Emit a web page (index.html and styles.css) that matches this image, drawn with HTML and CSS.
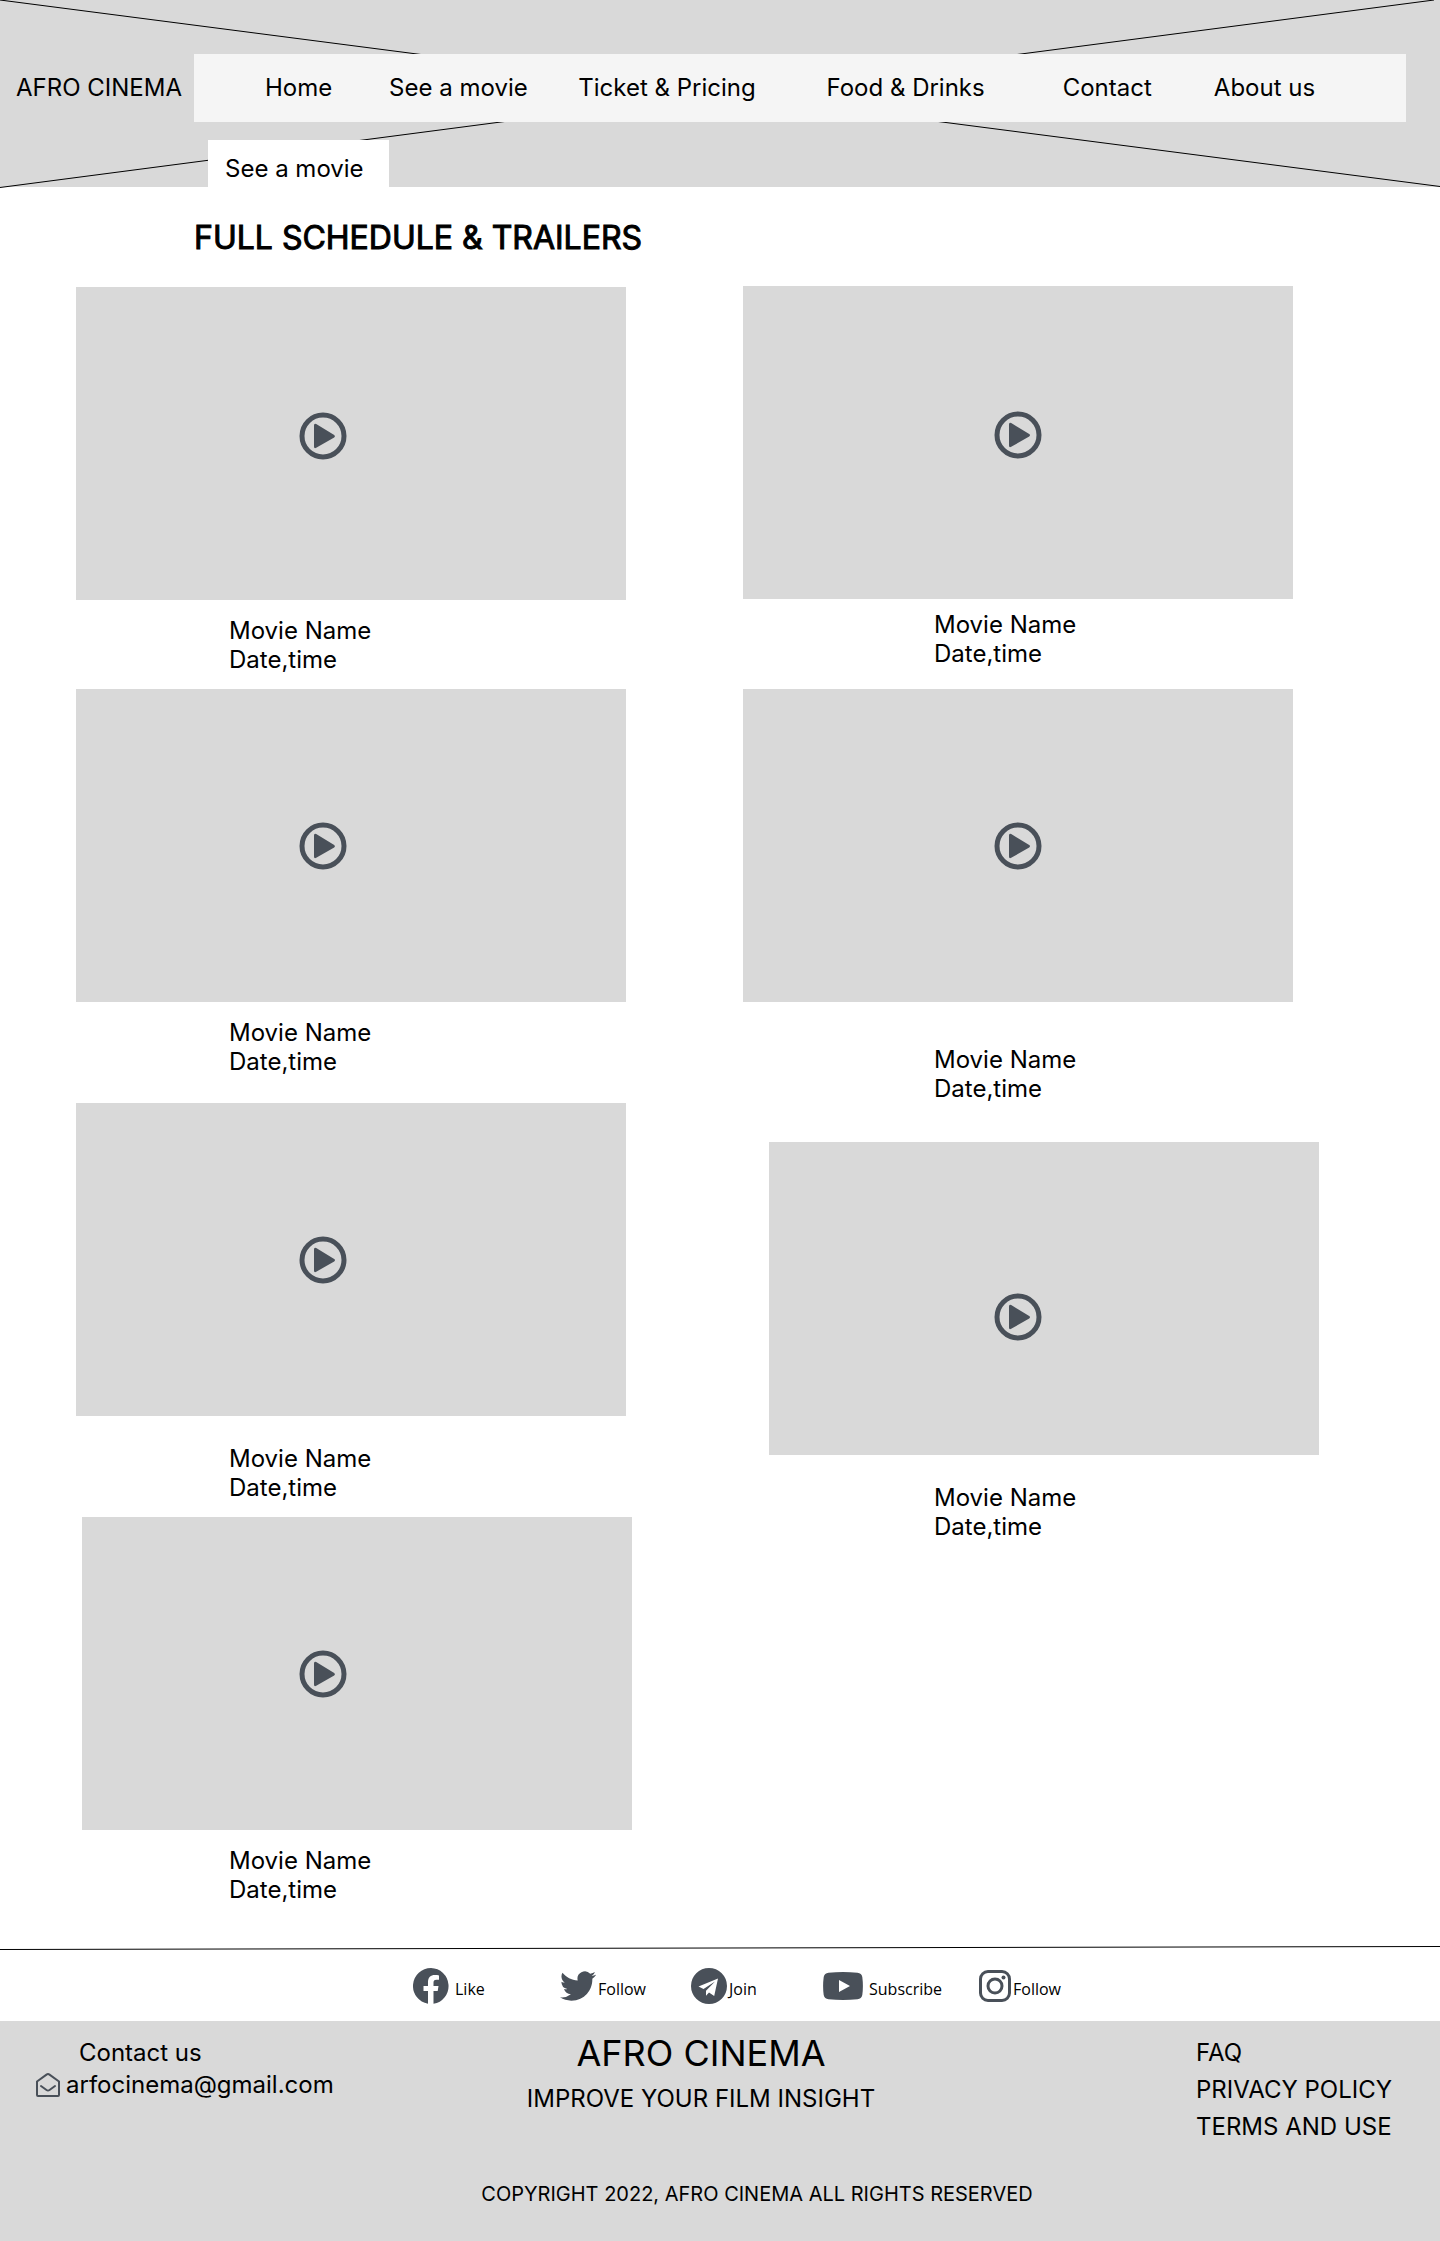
FILE: index.html
```html
<!DOCTYPE html>
<html lang="en">
<head>
<meta charset="utf-8">
<meta name="viewport" content="width=device-width, initial-scale=1">
<title>Afro Cinema – Full schedule &amp; trailers</title>
<link rel="stylesheet" href="styles.css">
</head>
<body>
<svg class="sprite" aria-hidden="true">
  <symbol id="play" viewBox="0 0 48 48">
    <circle cx="24" cy="24" r="21" fill="none" stroke="currentColor" stroke-width="5"/>
    <path d="M15 13.500v21q0 2.400 2.200 1.300l18-10.300q1.600-1.200 0-2.400l-18-11q-2.200-1.200-2.200 1.400z" fill="currentColor"/>
  </symbol>
</svg>

<header class="hero">
  <svg class="hero-cross" viewBox="0 0 1440 187" preserveAspectRatio="none" aria-hidden="true">
    <path d="M0 0L1440 186.500M0 187.500L1434 0" stroke="#000" fill="none"/>
  </svg>
  <div class="bar">
    <a class="brand" href="#">AFRO CINEMA</a>
    <nav class="nav">
      <a href="#">Home</a>
      <a href="#">See a movie</a>
      <a href="#">Ticket &amp; Pricing</a>
      <a href="#">Food &amp; Drinks</a>
      <a href="#">Contact</a>
      <a href="#">About us</a>
    </nav>
  </div>
  <a class="tab" href="#">See a movie</a>
</header>

<main>
  <h1 class="title">FULL SCHEDULE &amp; TRAILERS</h1>
  <div class="schedule">
    <div class="column column-left">
      <article class="movie">
        <div class="thumb thumb-high"><button class="play" aria-label="Play trailer"><svg><use href="#play"/></svg></button></div>
        <p class="caption">Movie Name<br>Date,time</p>
      </article>
      <article class="movie">
        <div class="thumb"><button class="play" aria-label="Play trailer"><svg><use href="#play"/></svg></button></div>
        <p class="caption">Movie Name<br>Date,time</p>
      </article>
      <article class="movie movie-spaced">
        <div class="thumb"><button class="play" aria-label="Play trailer"><svg><use href="#play"/></svg></button></div>
        <p class="caption caption-low">Movie Name<br>Date,time</p>
      </article>
      <article class="movie">
        <div class="thumb thumb-nudged"><button class="play" aria-label="Play trailer"><svg><use href="#play"/></svg></button></div>
        <p class="caption">Movie Name<br>Date,time</p>
      </article>
    </div>
    <div class="column column-right">
      <article class="movie">
        <div class="thumb thumb-high"><button class="play" aria-label="Play trailer"><svg><use href="#play"/></svg></button></div>
        <p class="caption caption-tight">Movie Name<br>Date,time</p>
      </article>
      <article class="movie">
        <div class="thumb"><button class="play" aria-label="Play trailer"><svg><use href="#play"/></svg></button></div>
        <p class="caption caption-lowest">Movie Name<br>Date,time</p>
      </article>
      <article class="movie">
        <div class="thumb thumb-shifted"><button class="play" aria-label="Play trailer"><svg><use href="#play"/></svg></button></div>
        <p class="caption caption-low">Movie Name<br>Date,time</p>
      </article>
    </div>
  </div>
</main>

<svg class="rule" viewBox="0 0 1440 4" preserveAspectRatio="none" aria-hidden="true"><path d="M0 3.500L1440 .5" stroke="#000" fill="none"/></svg>

<div class="social">
  <a class="roomy" href="#"><svg class="ico ico-fb" viewBox="0 0 36 36"><path fill="currentColor" d="M18 0a18 18 0 0 0-3 35.750V23h-4.500v-5H15v-4c0-4.600 2.700-7 6.800-7 1.600 0 3.200.2 4.200.4v4.300h-2.500c-2.300 0-3 1.300-3 2.800V18h5l-.8 5h-4.200v12.750A18 18 0 0 0 18 0z"/></svg><span>Like</span></a>
  <a href="#"><svg class="ico ico-tw" viewBox="0 0 24 20"><path fill="currentColor" d="M23.950 2.570a10 10 0 0 1-2.820.77 4.960 4.960 0 0 0 2.160-2.720 9.900 9.900 0 0 1-3.120 1.180 4.920 4.920 0 0 0-8.380 4.480C7.690 6.090 4.070 4.130 1.640 1.150a4.820 4.820 0 0 0-.67 2.480c0 1.710.87 3.210 2.190 4.090a4.900 4.900 0 0 1-2.230-.61v.06a4.920 4.920 0 0 0 3.950 4.830 5 5 0 0 1-2.210.08 4.940 4.940 0 0 0 4.600 3.420A9.870 9.870 0 0 1 0 17.540a13.990 13.990 0 0 0 7.550 2.210c9.050 0 14-7.500 14-13.980 0-.21 0-.42-.02-.63a9.940 9.940 0 0 0 2.460-2.550z"/></svg><span>Follow</span></a>
  <a href="#"><svg class="ico ico-tg" viewBox="0 0 36 36"><path fill="currentColor" fill-rule="evenodd" d="M18 0a18 18 0 1 0 0 36 18 18 0 0 0 0-36zM27 10.500L7.500 18.600l5 2.400L24 13.500l-9 9.300v5l3-3.300 5.200 3.500z"/></svg><span>Join</span></a>
  <a class="roomy" href="#"><svg class="ico ico-yt" viewBox="0 0 40 28"><path fill="currentColor" fill-rule="evenodd" d="M5.500.8Q20-.6 34.500.8 38.600 1.300 39.300 5q1.200 9 0 18-.8 3.800-4.800 4.200-14.500 1.400-29 0-4-.4-4.800-4.200-1.200-9 0-18Q1.500 1.200 5.500.8zM16 8v12l11-6z"/></svg><span>Subscribe</span></a>
  <a href="#"><svg class="ico ico-ig" viewBox="0 0 32 32" fill="none" stroke="currentColor" stroke-width="3"><rect x="1.500" y="1.500" width="29" height="29" rx="7.500"/><circle cx="16" cy="16" r="7"/><circle cx="24.500" cy="7.500" r="2" fill="currentColor" stroke="none"/></svg><span>Follow</span></a>
</div>

<footer class="footer">
  <div class="footer-top">
    <address class="contact">
      <span class="contact-title">Contact us</span>
      <a class="mail" href="mailto:arfocinema@gmail.com"><svg viewBox="0 0 24 24" fill="none" stroke="currentColor" stroke-width="2" stroke-linejoin="round" stroke-linecap="round"><path d="M1 8.500L10.500 1.600q1.500-1 3 0L23 8.500V22q0 1-1 1H2q-1 0-1-1z"/><path d="M5 13l5.500 4q1.500 1 3 0L19 13"/></svg>arfocinema@gmail.com</a>
    </address>
    <div class="about">
      <p class="about-name">AFRO CINEMA</p>
      <p class="about-motto">IMPROVE YOUR FILM INSIGHT</p>
    </div>
    <nav class="legal">
      <a href="#">FAQ</a>
      <a href="#">PRIVACY POLICY</a>
      <a href="#">TERMS AND USE</a>
    </nav>
  </div>
  <p class="copyright">COPYRIGHT 2022, AFRO CINEMA ALL RIGHTS RESERVED</p>
</footer>
</body>
</html>
```
FILE: styles.css
```css
* {
  box-sizing: border-box;
}

body {
  margin: 0;
  background: #fff;
  color: #000;
  font: 24px/29px Inter, sans-serif;
}

a {
  color: inherit;
  text-decoration: none;
}

h1,
p {
  margin: 0;
}

svg {
  display: block;
}

.sprite {
  display: none;
}

/* Header */
.hero {
  position: relative;
  display: flex;
  flex-direction: column;
  align-items: flex-start;
  gap: 18px;
  padding-top: 54px;
  background: #d9d9d9;
}

.hero-cross {
  position: absolute;
  inset: 0;
  width: 100%;
  height: 100%;
  overflow: visible;
}

.bar {
  position: relative;
  display: flex;
  align-items: baseline;
  width: 100%;
  padding-right: 34px;
}

.brand {
  flex: 0 0 194px;
  padding-left: 16px;
}

.nav {
  flex: 1;
  display: grid;
  grid-template-columns: 124fr 189fr 248fr 236fr 151fr 192fr;
  padding: 19px 0 20px 71px;
  background: #f5f5f5;
  white-space: nowrap;
}

.tab {
  position: relative;
  width: 181px;
  margin-left: 208px;
  padding: 14px 0 4px 17px;
  background: #fff;
}

/* Schedule */
.title {
  padding: 32px 0 0 194px;
  font-size: 32px;
  line-height: 38px;
  font-weight: 400;
  -webkit-text-stroke: 1px #000;
}

.schedule {
  display: grid;
  grid-template-columns: 1fr 1fr;
  gap: 117px;
  padding: 29px 147px 0 76px;
}

.column {
  display: flex;
  flex-direction: column;
}

.column-left {
  gap: 15px;
  padding-top: 1px;
}

.column-right {
  gap: 21px;
}

.movie-spaced {
  padding-top: 12px;
}

.column-right .movie:last-child {
  padding-top: 18px;
}

.thumb {
  display: grid;
  place-items: center;
  aspect-ratio: 550 / 313;
  background: #d9d9d9;
}

.thumb-high {
  padding-bottom: 16px;
}

.column-left .thumb {
  padding-right: 56px;
}

.column-left .thumb-nudged {
  margin: 0 -6px 0 6px;
  padding-right: 68px;
}

.thumb-shifted {
  margin: 0 -26px 0 26px;
  padding: 36px 52px 0 0;
}

.play {
  padding: 0;
  border: 0;
  background: none;
  color: #495059;
  cursor: pointer;
}

.play svg {
  width: 48px;
  height: 48px;
}

.caption {
  padding-top: 16px;
}

.column-left .caption {
  padding-left: 153px;
}

.column-right .caption {
  padding-left: 191px;
}

.caption-tight {
  padding-top: 11px;
}

.caption-low {
  padding-top: 28px;
}

.caption-lowest {
  padding-top: 43px;
}

/* Social links */
.rule {
  width: 100%;
  height: 4px;
  margin-top: 42px;
}

.social {
  display: grid;
  grid-template-columns: 147fr 131fr 132fr 156fr 461fr;
  align-items: center;
  height: 71px;
  padding-left: 413px;
  font: 16px/20px "Open Sans", sans-serif;
}

.social a {
  display: flex;
  align-items: center;
  gap: 2px;
}

.social .roomy {
  gap: 6px;
}

.social span {
  padding-top: 6px;
}

.ico {
  color: #495059;
}

.ico-fb,
.ico-tg {
  width: 36px;
  height: 36px;
}

.ico-tw {
  width: 36px;
  height: 30px;
}

.ico-yt {
  width: 40px;
  height: 28px;
}

.ico-ig {
  width: 32px;
  height: 32px;
}

/* Footer */
.footer {
  padding: 16px 36px 31px;
  background: #d9d9d9;
  line-height: 32px;
}

.footer-top {
  display: grid;
  grid-template-columns: 485fr 360fr 315fr 208fr;
  white-space: nowrap;
}

.contact {
  font-style: normal;
}

.contact-title {
  display: block;
  padding-left: 43px;
}

.mail {
  display: flex;
  align-items: center;
  gap: 6px;
}

.mail svg {
  width: 24px;
  height: 24px;
  color: #495059;
}

.about {
  text-align: center;
}

.about-name {
  font-size: 36px;
}

.about-motto {
  padding-top: 14px;
}

.legal {
  grid-column: 4;
  display: grid;
  row-gap: 5px;
}

.copyright {
  padding: 35px 0 0 74px;
  font-size: 20px;
  text-align: center;
}
```
